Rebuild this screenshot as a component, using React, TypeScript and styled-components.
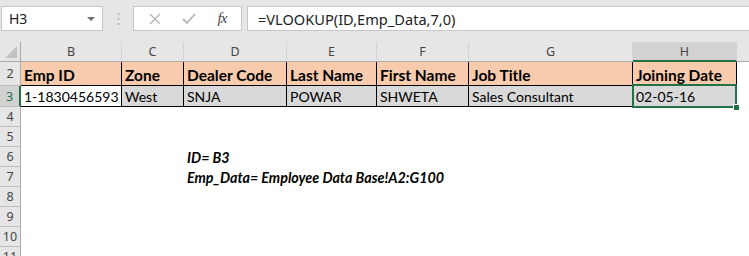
import { Fragment } from 'react';
import styled, { createGlobalStyle, css } from 'styled-components';

const GlobalStyle = createGlobalStyle`
  html, body {
    margin: 0;
    padding: 0;
    background: #ffffff;
  }
  body {
    width: 749px;
    height: 256px;
    overflow: hidden;
  }
`;

const columns = [
  { key: 'B', width: 101 },
  { key: 'C', width: 62 },
  { key: 'D', width: 103 },
  { key: 'E', width: 90 },
  { key: 'F', width: 92 },
  { key: 'G', width: 164 },
  { key: 'H', width: 104 },
];

const headers = ['Emp ID', 'Zone', 'Dealer Code', 'Last Name', 'First Name', 'Job Title', 'Joining Date'];
const values = ['1-1830456593', 'West', 'SNJA', 'POWAR', 'SHWETA', 'Sales Consultant', '02-05-16'];

// notes typed into column D
const notes: Record<number, string> = {
  6: 'ID= B3',
  7: 'Emp_Data= Employee Data Base!A2:G100',
};

const template = `21px ${columns.map(c => c.width + 'px').join(' ')} 1fr`;

const Page = styled.div`
  width: 749px;
  height: 256px;
  overflow: hidden;
  background: #fff;
`;

const Toolbar = styled.div`
  height: 42px;
  background: #e6e6e6;
  display: flex;
  align-items: flex-start;
  padding-top: 6px;
  box-sizing: border-box;
  padding-left: 1px;
`;

const NameBox = styled.div`
  width: 102px;
  height: 25px;
  box-sizing: border-box;
  background: #fff;
  border: 1px solid #c6c6c6;
  display: flex;
  align-items: center;
  justify-content: space-between;
  padding: 0 7px 0 7px;
  font-family: 'Noto Sans', sans-serif;
  font-size: 14px;
  color: #222;
`;

const Caret = styled.span`
  width: 0;
  height: 0;
  border-left: 4px solid transparent;
  border-right: 4px solid transparent;
  border-top: 4px solid #6d6d6d;
`;

const Grip = styled.div`
  width: 30px;
  display: flex;
  justify-content: center;
  align-items: center;
  height: 25px;
`;

const ButtonBox = styled.div`
  width: 109px;
  height: 25px;
  box-sizing: border-box;
  background: #fff;
  border: 1px solid #c6c6c6;
  display: flex;
  align-items: center;
  justify-content: space-around;
  padding: 0 4px;
`;

const Fx = styled.span`
  font-family: 'Liberation Serif', serif;
  font-style: italic;
  font-size: 15px;
  color: #444;
  letter-spacing: -1px;
`;

const FormulaBox = styled.div`
  flex: 1;
  margin-left: 5px;
  height: 25px;
  box-sizing: border-box;
  background: #fff;
  border: 1px solid #c6c6c6;
  border-right: none;
  display: flex;
  align-items: center;
  padding-left: 10px;
  font-family: 'Noto Sans', sans-serif;
  font-size: 14.6px;
  color: #222;
`;

const Grid = styled.div`
  display: grid;
  grid-template-columns: ${template};
  grid-auto-rows: min-content;
`;

const Corner = styled.div`
  height: 20px;
  box-sizing: border-box;
  background: #e6e6e6;
  border-right: 1px solid #ababab;
  border-bottom: 1px solid #ababab;
  position: relative;
  overflow: hidden;

  &::after {
    content: '';
    position: absolute;
    right: 3px;
    bottom: 3px;
    width: 0;
    height: 0;
    border-left: 12px solid transparent;
    border-bottom: 12px solid #c2c2c2;
  }
`;

const ColHead = styled.div<{ $active?: boolean }>`
  height: 20px;
  box-sizing: border-box;
  background: ${p => (p.$active ? '#d2d2d2' : '#e6e6e6')};
  border-right: 1px solid #d4d4d4;
  border-bottom: ${p => (p.$active ? '2px solid #217346' : '1px solid #ababab')};
  display: flex;
  align-items: center;
  justify-content: center;
  font-family: 'Noto Sans', sans-serif;
  font-size: 12.5px;
  color: #444;
`;

const Filler = styled.div`
  height: 20px;
  box-sizing: border-box;
  background: #e6e6e6;
  border-bottom: 1px solid #ababab;
`;

const RowHead = styled.div<{ $active?: boolean; $h?: number }>`
  height: ${p => p.$h ?? 20}px;
  box-sizing: border-box;
  background: ${p => (p.$active ? '#d2d2d2' : '#e6e6e6')};
  border-right: ${p => (p.$active ? '2px solid #217346' : '1px solid #ababab')};
  border-bottom: 1px solid #bdbdbd;
  display: flex;
  align-items: center;
  justify-content: center;
  font-family: 'Noto Sans', sans-serif;
  font-size: 12.5px;
  color: ${p => (p.$active ? '#217346' : '#444')};
`;

type Kind = 'head' | 'data' | 'blank';

const Cell = styled.div<{ $kind: Kind; $fill?: string; $h?: number; $sel?: boolean }>`
  height: ${p => p.$h ?? 20}px;
  box-sizing: border-box;
  display: flex;
  align-items: center;
  padding-left: 3px;
  white-space: nowrap;
  font-family: 'Lato', sans-serif;
  color: #000;
  background: ${p => p.$fill ?? '#fff'};
  position: relative;
  ${p =>
    p.$kind === 'head' &&
    css`
      font-weight: 700;
      font-size: 15.5px;
      border-right: 1px solid #000;
      border-bottom: 1px solid #000;
      padding-top: 2px;
    `}
  ${p =>
    p.$kind === 'data' &&
    css`
      font-size: 14px;
      border-right: 1px solid #000;
      border-bottom: 1px solid #000;
    `}
  ${p =>
    p.$sel &&
    css`
      &::after {
        content: '';
        position: absolute;
        left: -1px;
        top: -2px;
        right: -1px;
        bottom: -2px;
        border: 2px solid #217346;
        pointer-events: none;
      }
      &::before {
        content: '';
        position: absolute;
        right: -4px;
        bottom: -5px;
        width: 5px;
        height: 5px;
        background: #217346;
        border: 1px solid #fff;
        z-index: 2;
      }
    `}
`;

const Note = styled.div`
  grid-column: span 6;
  height: 20px;
  display: flex;
  align-items: center;
  padding-left: 3px;
  font-family: 'Lato', sans-serif;
  font-weight: 700;
  font-style: italic;
  font-size: 14.3px;
  color: #000;
  white-space: nowrap;
`;

const Blank = styled.div<{ $span: number }>`
  grid-column: span ${p => p.$span};
  height: 20px;
`;

const CrossIcon = () => (
  <svg width="12" height="12" viewBox="0 0 12 12">
    <path d="M1 1 L11 11 M11 1 L1 11" stroke="#b4b4b4" strokeWidth="1.3" fill="none" />
  </svg>
);

const CheckIcon = () => (
  <svg width="14" height="12" viewBox="0 0 14 12">
    <path d="M1 6 L5 10 L13 1" stroke="#b4b4b4" strokeWidth="1.8" fill="none" />
  </svg>
);

const GripIcon = () => (
  <svg width="3" height="12" viewBox="0 0 3 12">
    <rect x="0.5" y="0" width="2" height="2" fill="#b8b8b8" />
    <rect x="0.5" y="5" width="2" height="2" fill="#b8b8b8" />
    <rect x="0.5" y="10" width="2" height="2" fill="#b8b8b8" />
  </svg>
);

const App = () => {
  const extraRows = [4, 5, 6, 7, 8, 9, 10, 11];
  return (
    <Page>
      <GlobalStyle />
      <Toolbar>
        <NameBox>
          <span>H3</span>
          <Caret />
        </NameBox>
        <Grip>
          <GripIcon />
        </Grip>
        <ButtonBox>
          <CrossIcon />
          <CheckIcon />
          <Fx>fx</Fx>
        </ButtonBox>
        <FormulaBox>=VLOOKUP(ID,Emp_Data,7,0)</FormulaBox>
      </Toolbar>
      <Grid>
        <Corner />
        {columns.map(c => (
          <ColHead key={c.key} $active={c.key === 'H'}>
            {c.key}
          </ColHead>
        ))}
        <Filler />

        <RowHead $h={24}>2</RowHead>
        {headers.map(h => (
          <Cell key={h} $kind="head" $h={24} $fill="#f8cbad">
            {h}
          </Cell>
        ))}
        <Cell $kind="blank" $h={24} />

        <RowHead $h={21} $active>
          3
        </RowHead>
        {values.map((v, i) => (
          <Cell
            key={v}
            $kind="data"
            $h={21}
            $fill={i === 0 ? '#ffffff' : '#d9d9d9'}
            $sel={i === values.length - 1}
          >
            {v}
          </Cell>
        ))}
        <Cell $kind="blank" $h={21} />

        {extraRows.map(r => (
          <Fragment key={r}>
            <RowHead>{r}</RowHead>
            {notes[r] ? (
              <>
                <Blank $span={2} />
                <Note>{notes[r]}</Note>
              </>
            ) : (
              <Blank $span={8} />
            )}
          </Fragment>
        ))}
      </Grid>
    </Page>
  );
};

export default App;
